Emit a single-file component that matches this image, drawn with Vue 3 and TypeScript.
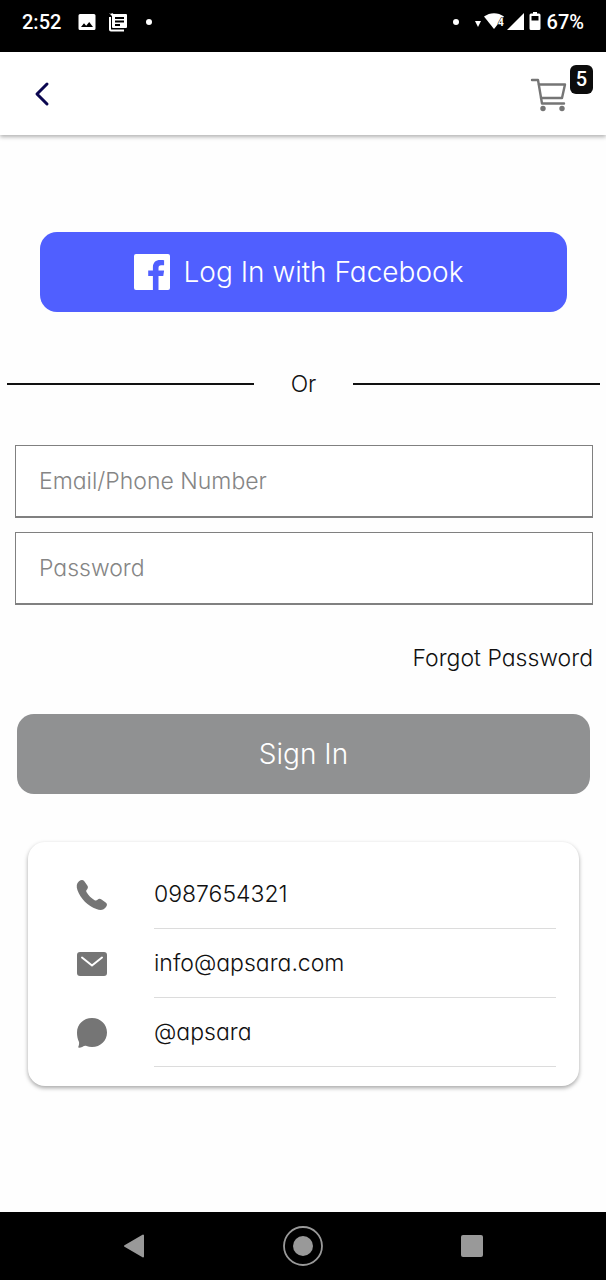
<script setup lang="ts">
import { ref } from 'vue'

type ContactKind = 'phone' | 'mail' | 'chat'

interface Contact {
  kind: ContactKind
  label: string
  href: string
}

const cartCount = ref(5)
const login = ref('')
const password = ref('')

const contacts: Contact[] = [
  { kind: 'phone', label: '0987654321', href: 'tel:0987654321' },
  { kind: 'mail', label: 'info@apsara.com', href: 'mailto:info@apsara.com' },
  { kind: 'chat', label: '@apsara', href: '#apsara' },
]
</script>

<template>
  <div class="screen">
    <div class="status">
      <div class="status-side">
        <span class="clock">2:52</span>
        <svg class="status-picture" width="18" height="18" viewBox="0 0 18 18" aria-hidden="true">
          <path fill="#fff" fill-rule="evenodd" d="M2 1h14a1.500 1.500 0 0 1 1.500 1.500v13a1.500 1.500 0 0 1-1.500 1.500H2a1.500 1.500 0 0 1-1.500-1.500v-13A1.500 1.500 0 0 1 2 1zM3 14h12l-3.800-5-3 3.800L6 10.300z" />
        </svg>
        <svg class="status-news" width="20" height="20" viewBox="0 0 20 20" aria-hidden="true">
          <path fill="#fff" fill-rule="evenodd" d="M1 1l2 1 1-1 1.500 1H18a1 1 0 0 1 1 1v12a1 1 0 0 1-1 1H5a1 1 0 0 1-1-1V4zM7 5v2h9V5zM7 8.500v2h9v-2zM7 12v2h5v-2z" />
          <path fill="none" stroke="#fff" stroke-width="2" d="M2 5v12.500a1 1 0 0 0 1 1h13" />
        </svg>
        <span class="dot"></span>
      </div>
      <div class="status-side status-right">
        <span class="dot"></span>
        <svg width="82" height="20" viewBox="0 0 82 20" class="signals" aria-hidden="true">
          <path fill="#fff" d="M16 9h6l-3 6z" />
          <path fill="#fff" d="M25 4.500c6-4.500 14-4.500 20 0L35 17z" />
          <path fill="#fff" d="M48 18L65 1v17z" />
          <path fill="#fff" fill-rule="evenodd" d="M74 0h4v1.500h2q1.500 0 1.500 1.500v13.500q0 1.500-1.500 1.500h-8q-1.500 0-1.500-1.500V3q0-1.500 1.500-1.500h2zM72.500 4v4.500h7V4z" />
          <text x="39" y="14" class="wifi-mark">4</text>
        </svg>
        <span class="battery">67%</span>
      </div>
    </div>

    <header class="topbar">
      <button class="icon-button" type="button" aria-label="Back">
        <svg width="18" height="28" viewBox="0 0 18 28" aria-hidden="true">
          <path d="M15 4L5 14l10 10" fill="none" stroke="#0b0750" stroke-width="3" stroke-linecap="round" stroke-linejoin="round" />
        </svg>
      </button>
      <button class="icon-button cart" type="button" aria-label="Cart">
        <svg width="38" height="36" viewBox="0 0 38 36" aria-hidden="true">
          <g fill="none" stroke="#757575" stroke-width="2.400" stroke-linecap="round" stroke-linejoin="round">
            <path d="M2 3h6l4 23.500h22" />
            <path d="M9 7.500h26l-3 13.500H11" />
          </g>
          <circle cx="13" cy="31.500" r="2.700" fill="#757575" />
          <circle cx="32" cy="31.500" r="2.700" fill="#757575" />
        </svg>
        <span class="badge">{{ cartCount }}</span>
      </button>
    </header>

    <main class="content">
      <button class="facebook" type="button">
        <svg width="36" height="36" viewBox="0 0 36 36" aria-hidden="true">
          <path fill="#fff" d="M2 0h32a2 2 0 0 1 2 2v32a2 2 0 0 1-2 2H24.500V22h4.800l.8-5.500h-5.600V14c0-1.800.8-2.700 2.700-2.700h2.900V6.300c-1-.2-2.300-.3-3.900-.3-4.500 0-7.300 2.600-7.300 7.200v3.300h-4.700V22h4.700v14H2a2 2 0 0 1-2-2V2a2 2 0 0 1 2-2z" />
        </svg>
        <span>Log In with Facebook</span>
      </button>

      <div class="divider"><span class="divider-word">Or</span></div>

      <form class="form" @submit.prevent>
        <input v-model="login" class="field" type="text" placeholder="Email/Phone Number" aria-label="Email/Phone Number" autocomplete="username" />
        <input v-model="password" class="field" type="password" placeholder="Password" aria-label="Password" autocomplete="current-password" />
        <a class="forgot" href="#forgot">Forgot Password</a>
        <button class="sign-in" type="submit">Sign In</button>
      </form>

      <ul class="contacts">
        <li v-for="contact in contacts" :key="contact.kind" class="contact">
          <svg width="32" height="32" viewBox="0 0 32 32" aria-hidden="true">
            <path v-if="contact.kind === 'phone'" fill="#757575" d="M3 2.300C5 .6 7 .5 8.300 2.200l3 4.300c1 1.500.7 2.700-.3 3.900-1 1-1 1.700-.4 2.800 1.800 3.200 4.700 6 8 8 1.200.7 2 .5 2.900-.4 1.200-1.100 2.500-1.300 4-.3l4.200 2.900c1.700 1.200 1.600 2.800.3 4.700-2.300 3.300-5.600 3.600-9.600 2C12 27 4.400 19.500 1.500 11.200.2 7.500.5 4.400 3 2.300z" />
            <template v-else-if="contact.kind === 'mail'">
              <rect x="1" y="4" width="30" height="24" rx="3" fill="#757575" />
              <path d="M6 9.500l10 8 10-8" fill="none" stroke="#fff" stroke-width="2" stroke-linecap="round" stroke-linejoin="round" />
            </template>
            <path v-else fill="#757575" d="M16 1c8.500 0 15 6.300 15 14.500S24.500 30 16 30c-2 0-3.800-.4-5.500-1-1.500-.5-2.800.3-4.300.9-1.200.5-2.400.9-3.300.8-.6-.1-.8-.6-.5-1.200.6-1.400.9-3.200.6-4.500C1.600 22 1 19 1 15.500 1 7.300 7.500 1 16 1z" />
          </svg>
          <a class="contact-link" :href="contact.href">{{ contact.label }}</a>
        </li>
      </ul>
    </main>

    <nav class="navbar" aria-label="System">
      <button class="icon-button" type="button" aria-label="Go back">
        <svg width="40" height="40" viewBox="0 0 40 40" aria-hidden="true">
          <path d="M11 20l18-10.500v21z" fill="#999" stroke="#999" stroke-width="2" stroke-linejoin="round" />
        </svg>
      </button>
      <button class="icon-button" type="button" aria-label="Home">
        <svg width="40" height="40" viewBox="0 0 40 40" aria-hidden="true">
          <circle cx="20" cy="20" r="19" fill="none" stroke="#999" stroke-width="1.800" />
          <circle cx="20" cy="20" r="10" fill="#999" />
        </svg>
      </button>
      <button class="icon-button" type="button" aria-label="Recent apps">
        <svg width="40" height="40" viewBox="0 0 40 40" aria-hidden="true">
          <rect x="9" y="9" width="22" height="22" rx="2" fill="#999" />
        </svg>
      </button>
    </nav>
  </div>
</template>

<style>
body {
  margin: 0;
  background: #fefefe;
}
</style>

<style scoped>
.screen {
  display: flex;
  flex-direction: column;
  min-height: 100vh;
  background: #fefefe;
  color: #111;
  font-family: 'Century Gothic', Inter, 'Liberation Sans', sans-serif;
  font-feature-settings: 'cv11';
  font-weight: 300;
  font-size: 23px;
  line-height: 32px;
}

button,
input {
  font: inherit;
  font-feature-settings: inherit;
  color: inherit;
  box-sizing: border-box;
}

svg {
  display: block;
  flex: none;
}

.status {
  display: flex;
  justify-content: space-between;
  height: 44px;
  padding: 0 22px 8px;
  background: #000;
  color: #fff;
  font-family: Roboto, sans-serif;
  font-weight: 500;
  font-size: 20px;
}

.status-side {
  display: flex;
  align-items: center;
}

.status-picture {
  margin-left: 17px;
}

.status-news {
  margin: 0 18px 0 12px;
}

.status-right .battery {
  margin-left: 6px;
}

.wifi-mark {
  font: 700 10px Roboto, sans-serif;
  fill: #fff;
  stroke: #000;
  stroke-width: 1px;
  paint-order: stroke;
}

.dot {
  width: 6px;
  height: 6px;
  border-radius: 50%;
  background: #fff;
}

.icon-button {
  display: flex;
  padding: 0;
  border: 0;
  background: none;
  cursor: pointer;
}

.topbar {
  display: flex;
  align-items: center;
  justify-content: space-between;
  height: 83px;
  padding: 0 13px 0 32px;
  background: #fff;
  box-shadow: 0 2px 4px rgba(0, 0, 0, 0.3);
}

.cart {
  gap: 2px;
  align-items: flex-start;
}

.cart svg {
  margin-top: 12px;
}

.badge {
  width: 23px;
  margin-bottom: 29px;
  border-radius: 6px;
  background: #0c0c0c;
  color: #fff;
  font-family: Roboto, sans-serif;
  font-weight: 500;
  font-size: 20px;
  line-height: 29px;
  text-align: center;
}

.content {
  flex: 1;
  display: flex;
  flex-direction: column;
  padding-top: 97px;
}

.facebook,
.sign-in {
  display: flex;
  align-items: center;
  justify-content: center;
  height: 80px;
  border: 0;
  border-radius: 17px;
  color: #fff;
  font-size: 28px;
  cursor: pointer;
}

.facebook {
  gap: 14px;
  margin: 0 39px 0 40px;
  padding: 0 10px 0 0;
  background: #505fff;
}

.divider {
  display: flex;
  align-items: center;
  margin: 56px 6px 0 7px;
}

.divider::before,
.divider::after {
  content: '';
  flex: 1;
  height: 2px;
  background: #111;
}

.divider-word {
  width: 99px;
  text-align: center;
}

.form {
  display: flex;
  flex-direction: column;
  gap: 14px;
  padding: 45px 13px 0 15px;
}

.field {
  width: 100%;
  height: 73px;
  padding: 0 23px;
  border: 1px solid #808080;
  border-bottom-width: 2px;
  border-radius: 0;
  background: #fff;
  outline: 0;
}

.field::placeholder {
  color: #858585;
  opacity: 1;
}

.forgot {
  align-self: flex-end;
  margin-top: 23px;
  color: inherit;
  text-decoration: none;
}

.sign-in {
  margin: 26px 3px 0 2px;
  background: #909192;
}

.contacts {
  display: flex;
  flex-direction: column;
  margin: 48px 27px 0 28px;
  padding: 18px 23px 19px 48px;
  border-radius: 17px;
  background: #fff;
  box-shadow: 0 2px 4px rgba(0, 0, 0, 0.35);
  list-style: none;
}

.contact {
  display: flex;
  align-items: center;
  gap: 46px;
}

.contact-link {
  flex: 1;
  padding: 18px 0;
  border-bottom: 1px solid #dcdcdc;
  color: inherit;
  text-decoration: none;
}

.navbar {
  display: flex;
  align-items: center;
  justify-content: space-between;
  height: 68px;
  padding: 0 114px;
  background: #000;
}
</style>
